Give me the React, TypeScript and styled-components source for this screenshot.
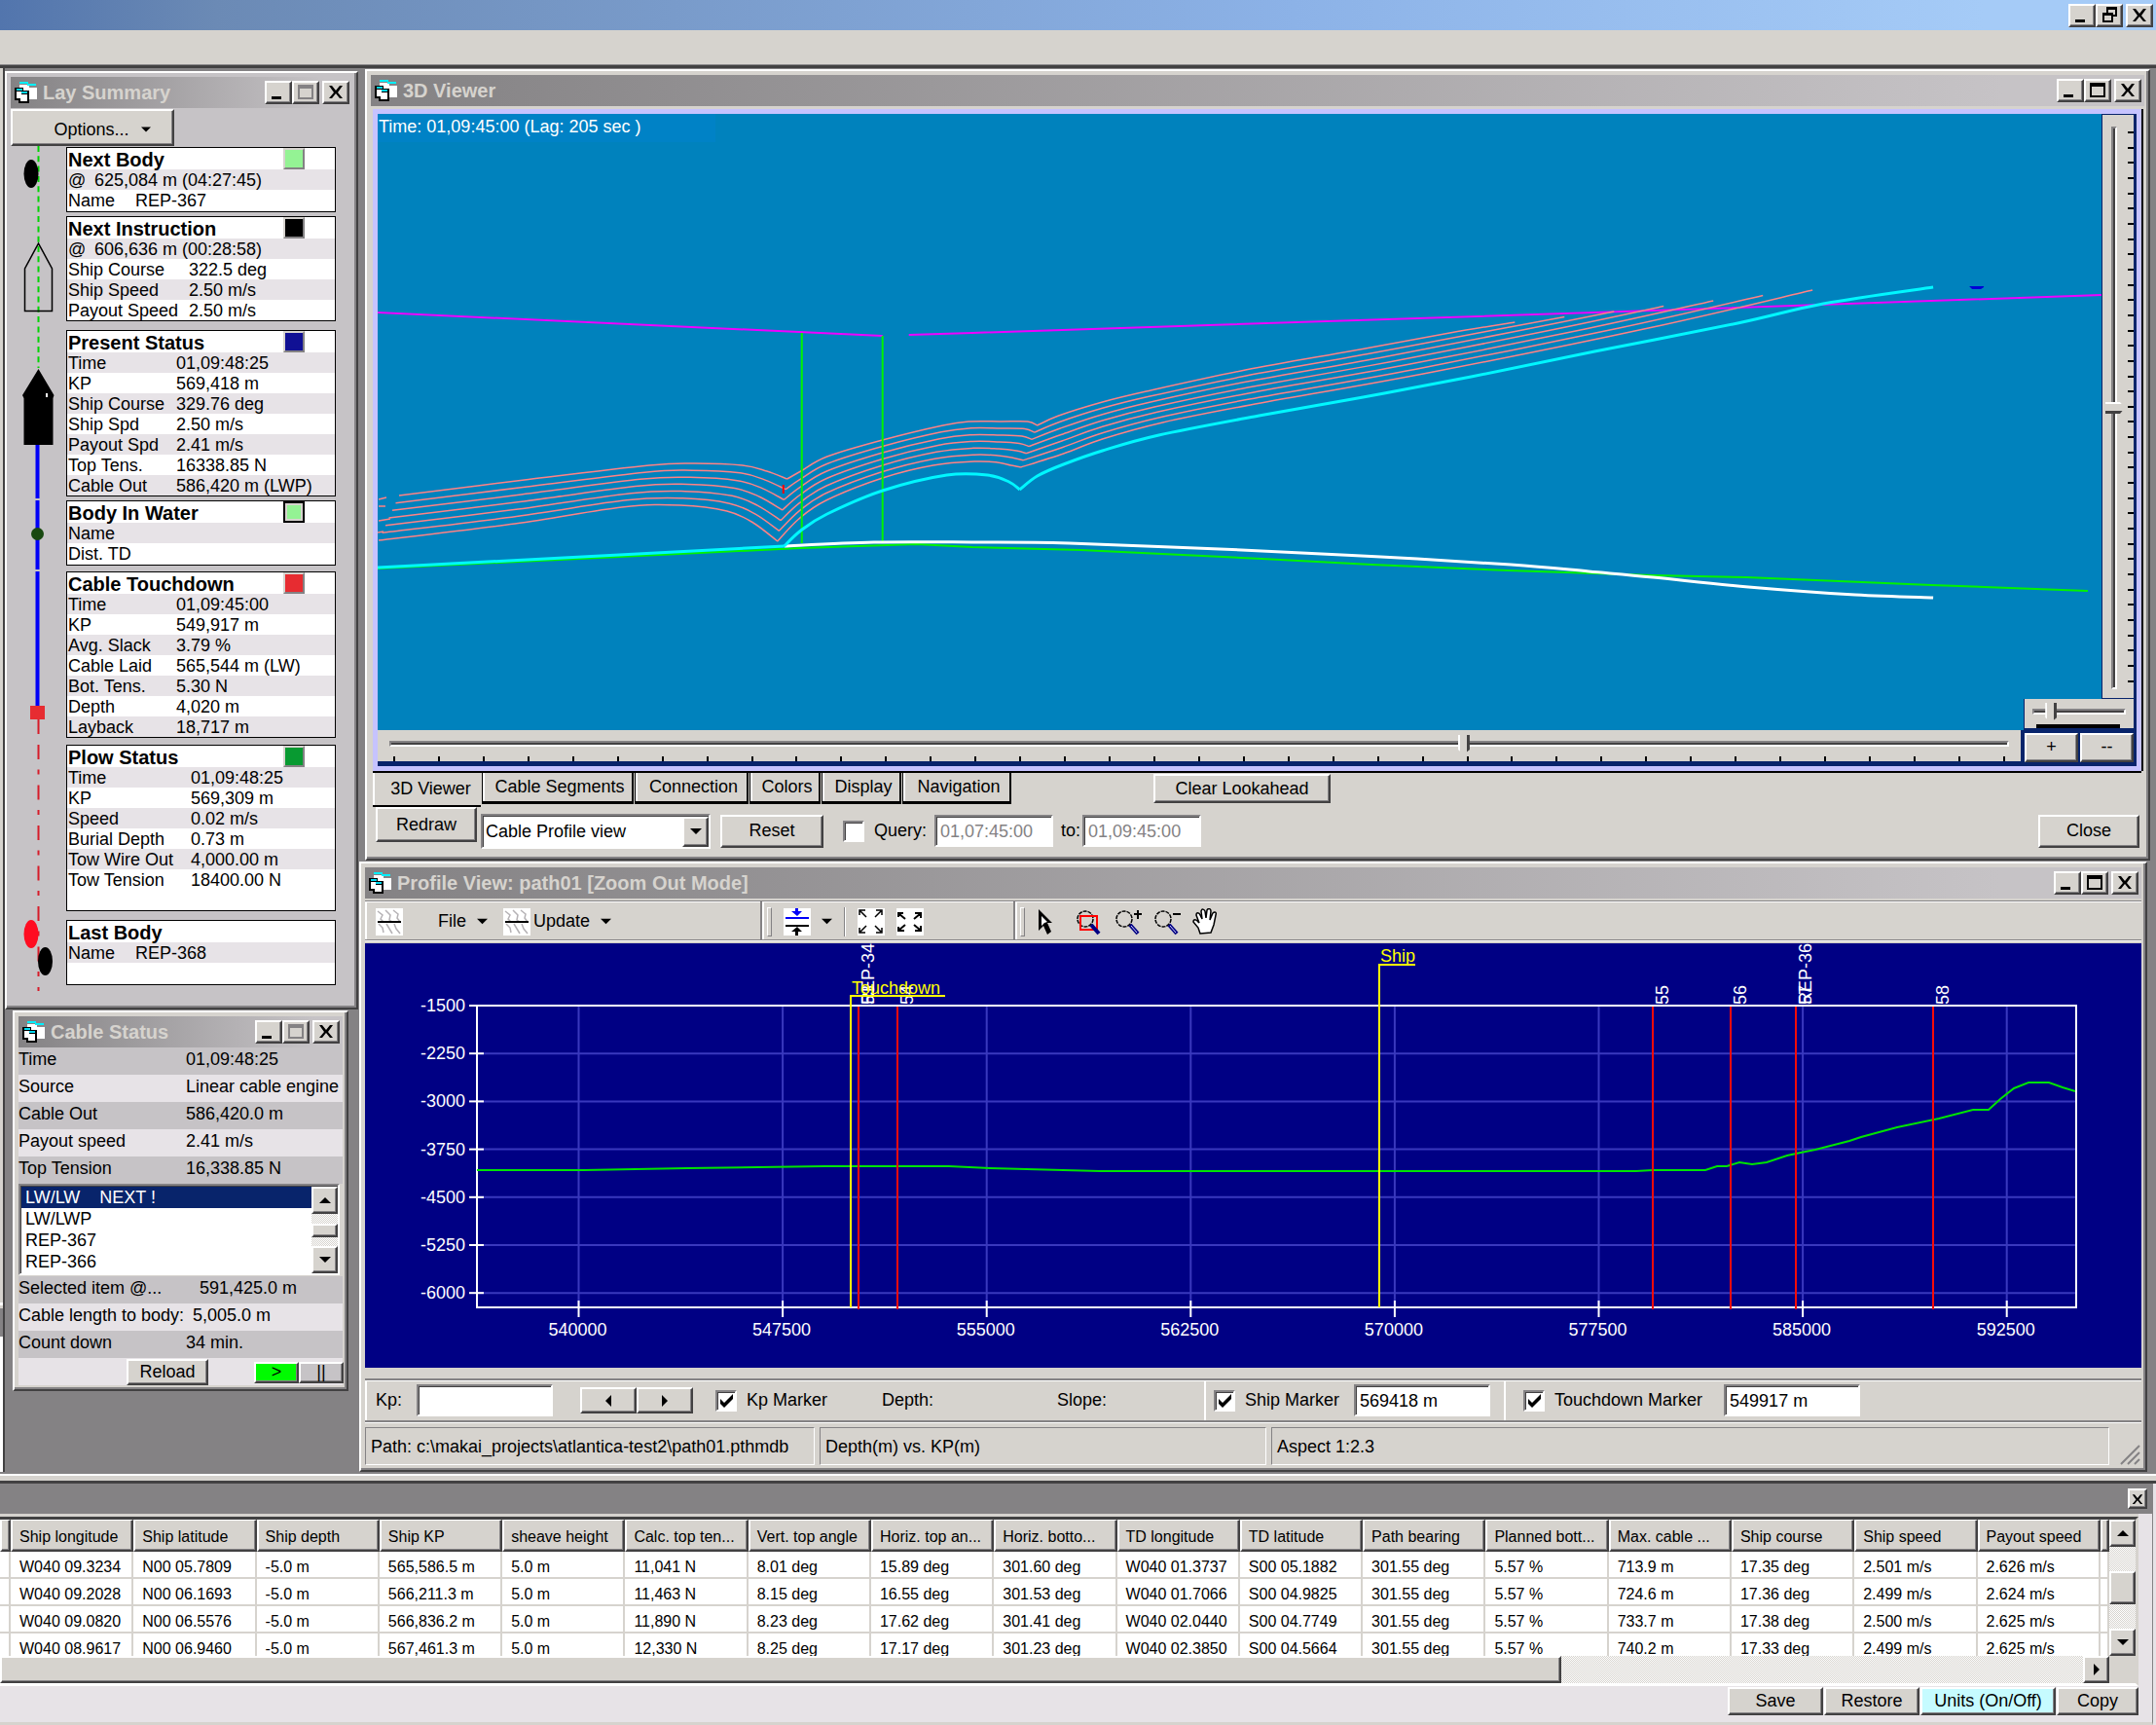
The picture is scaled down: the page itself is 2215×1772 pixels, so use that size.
import { Fragment } from 'react';
import type { ReactNode } from 'react';
import styled, { createGlobalStyle, css } from 'styled-components';

const face = '#d6d3ce';
const shade = '#848284';
const dark = '#424142';
const panel = '#c6c3c6';
const stripe = '#e7e3e7';
const navy = '#08246b';

const raised = css`
  border: 2px solid;
  border-color: #fff ${dark} ${dark} #fff;
  box-shadow: inset -1px -1px 0 ${shade};
  background: ${face};
`;

const sunken = css`
  border: 2px solid;
  border-color: ${shade} #fff #fff ${shade};
  box-shadow: inset 1px 1px 0 ${dark};
  background: #fff;
`;

const dither = css`
  background: repeating-conic-gradient(#fff 0 25%, ${face} 0 50%) 0 0 / 2px 2px;
`;

const GlobalStyle = createGlobalStyle`
  * {
    box-sizing: border-box;
  }

  body {
    margin: 0;
    background: ${stripe};
    color: #000;
    font: 18px/21px 'Liberation Sans', Arial, sans-serif;
  }

  button, input, select {
    margin: 0;
    padding: 0;
    border-radius: 0;
    color: inherit;
    font: inherit;
  }

  svg {
    display: block;
  }
`;

const Page = styled.div`
  display: flex;
  flex-direction: column;
  min-height: 100vh;
`;

const AppTitle = styled.header`
  display: flex;
  align-items: center;
  justify-content: flex-end;
  height: 31px;
  padding-right: 3px;
  background: linear-gradient(90deg, #5275ad 0, #6b8ab5 10%, #8cb2e7 60%, #a5cbf7 92%);
`;

const MenuBar = styled.div`
  height: 39px;
  background: ${face};
  border-bottom: 3px solid ${dark};
  box-shadow: inset 0 -1px 0 ${shade};
`;

const Workspace = styled.main`
  display: flex;
  padding: 1px 4px 2px 0;
  background: ${shade};
`;

const Neighbour = styled.div`
  width: 5px;
  margin-top: -1px;
  background: linear-gradient(#d6d3ce 0 1268px, #fff 1268px 1271px, #d6d3ce 1271px 1274px, #848284 1274px 1303px, #fff 1303px);
  border-right: 2px solid ${dark};
`;

const LeftColumn = styled.div`
  display: flex;
  flex-direction: column;
  gap: 1px;
  width: 363px;
  margin-top: 2px;
`;

const RightColumn = styled.div`
  display: flex;
  flex: 1;
  flex-direction: column;
  gap: 1px;
  min-width: 0;
  margin-left: 1px;
`;

const Frame = styled.section<{ $margin?: string; $body?: string }>`
  margin: ${({ $margin }) => $margin || '0'};
  padding: 4px;
  border: 2px solid;
  border-color: #fff ${dark} ${dark} #fff;
  box-shadow: inset -2px -2px 0 ${shade};
  background: ${({ $body }) => $body || face};
`;

const TitleBar = styled.div`
  display: flex;
  align-items: center;
  height: 32px;
  padding: 0 3px 0 4px;
  background: linear-gradient(90deg, ${shade}, ${panel} 92%);
`;

const TitleText = styled.h2`
  flex: 1;
  margin: 0 0 0 5px;
  color: ${face};
  font-size: 20px;
  line-height: 24px;
  white-space: nowrap;
`;

const Button = styled.button<{ $w?: number; $h?: number; $color?: string }>`
  ${raised}
  display: flex;
  align-items: center;
  justify-content: center;
  flex: none;
  width: ${({ $w }) => ($w ? `${$w}px` : 'auto')};
  height: ${({ $h }) => $h || 34}px;
  background: ${({ $color }) => $color || face};
  white-space: nowrap;
`;

const CaptionButton = styled(Button)`
  width: 28px;
  height: 24px;

  &:last-child {
    margin-left: 3px;
  }
`;

const paths: Record<string, ReactNode> = {
  min: <rect x="4" y="14" width="10" height="3" />,
  max: <path d="M3 2h16v15H3zM5 6v9h12V6z" fillRule="evenodd" />,
  restore: <path d="M8 1h11v10h-4v6H4V7h4zM10 4v3h5v2h2V4zM6 10v5h7v-5z" fillRule="evenodd" />,
  close: <path d="M4 3h3l4 5 4-5h3l-5 7 5 6h-3l-4-5-4 5H4l5-6z" />,
};

const Caption = ({ kind, muted }: { kind: string; muted?: boolean }) => (
  <CaptionButton aria-label={kind}>
    <svg width="22" height="20" fill={muted ? shade : '#000'}>{paths[kind]}</svg>
  </CaptionButton>
);

const FormIcon = () => (
  <svg width="24" height="24" viewBox="0 0 24 24" shapeRendering="crispEdges">
    <path d="M5 4h10v3h8v12H13v-9H5z" fill="#fff" />
    <path d="M5 1h9v2H5zM13 3h9v2h-9z" fill="#00f0ff" />
    <path d="M0 7h9v3h6v13H4v-3H0z" fill="#000" />
    <path d="M2 11h5v7H2zM6 14h7v7H6z" fill="#fff" />
    <path d="M2 8h6v2H2zM7 11h6v2H7z" fill="#00d8ef" />
  </svg>
);

type WindowProps = { title: string; muted?: boolean; margin?: string; body?: string; children: ReactNode };

const Window = ({ title, muted, margin, body, children }: WindowProps) => (
  <Frame $margin={margin} $body={body}>
    <TitleBar>
      <FormIcon />
      <TitleText>{title}</TitleText>
      <Caption kind="min" />
      <Caption kind="max" muted={muted} />
      <Caption kind="close" />
    </TitleBar>
    {children}
  </Frame>
);

const Arrow = ({ dir, size = 12 }: { dir: 'up' | 'down' | 'left' | 'right'; size?: number }) => {
  const d = {
    up: 'M0 9L6 3l6 6z',
    down: 'M0 3h12L6 9z',
    left: 'M9 0v12L3 6z',
    right: 'M3 0v12l6-6z',
  }[dir];
  return <svg width={size} height={size} viewBox="0 0 12 12"><path d={d} /></svg>;
};

/* ---------- Lay summary ---------- */

const OptionsButton = styled(Button)`
  gap: 12px;
  margin-top: 1px;
  padding: 4px 0 0 20px;
`;

const SummaryBody = styled.div`
  display: flex;
  background: ${panel};
`;

const Cards = styled.div`
  flex: 1;
  padding: 1px 17px 0 0;
`;

const Card = styled.div<{ $gap: number; $height: number }>`
  min-height: ${({ $height }) => $height}px;
  margin-top: ${({ $gap }) => $gap}px;
  border: 1px solid #000;
  background: #fff;
`;

const CardTitle = styled.div`
  display: flex;
  height: 22px;
  padding: 0 31px 0 1px;
  font-size: 20px;
  font-weight: 700;
  line-height: 24px;

  span {
    flex: 1;
  }
`;

const Swatch = styled.button<{ $color: string; $active?: boolean }>`
  width: 22px;
  height: 22px;
  border: 2px solid;
  border-color: ${({ $active }) => ($active ? '#000' : `${face} ${shade} ${shade} ${face}`)};
  box-shadow: ${({ $active }) => ($active ? `inset 0 0 0 2px ${face}` : 'none')};
  background: ${({ $color }) => $color};
`;

const CardRow = styled.div<{ $label: number }>`
  display: grid;
  grid-template-columns: ${({ $label }) => $label}px 1fr;
  height: 21px;
  padding-left: 1px;
  line-height: 22px;
  white-space: nowrap;

  &:nth-child(even) {
    background: ${stripe};
  }
`;

type CardData = {
  title: string;
  color?: string;
  active?: boolean;
  gap: number;
  height: number;
  label: number;
  rows: string[][];
};

const cards: CardData[] = [
  { title: 'Next Body', color: '#94f394', gap: 0, height: 67, label: 69, rows: [['@', '625,084 m (04:27:45)'], ['Name', 'REP-367']] },
  {
    title: 'Next Instruction', color: '#000', gap: 4, height: 108, label: 124,
    rows: [['@', '606,636 m (00:28:58)'], ['Ship Course', '322.5 deg'], ['Ship Speed', '2.50 m/s'], ['Payout Speed', '2.50 m/s']],
  },
  {
    title: 'Present Status', color: '#101094', gap: 9, height: 171, label: 111,
    rows: [
      ['Time', '01,09:48:25'], ['KP', '569,418 m'], ['Ship Course', '329.76 deg'], ['Ship Spd', '2.50 m/s'],
      ['Payout Spd', '2.41 m/s'], ['Top Tens.', '16338.85 N'], ['Cable Out', '586,420 m (LWP)'],
    ],
  },
  { title: 'Body In Water', color: '#94f394', active: true, gap: 4, height: 67, label: 111, rows: [['Name', ''], ['Dist. TD', '']] },
  {
    title: 'Cable Touchdown', color: '#e72c31', gap: 6, height: 171, label: 111,
    rows: [
      ['Time', '01,09:45:00'], ['KP', '549,917 m'], ['Avg. Slack', '3.79 %'], ['Cable Laid', '565,544 m (LW)'],
      ['Bot. Tens.', '5.30 N'], ['Depth', '4,020 m'], ['Layback', '18,717 m'],
    ],
  },
  {
    title: 'Plow Status', color: '#089a31', gap: 7, height: 171, label: 126,
    rows: [
      ['Time', '01,09:48:25'], ['KP', '569,309 m'], ['Speed', '0.02 m/s'], ['Burial Depth', '0.73 m'],
      ['Tow Wire Out', '4,000.00 m'], ['Tow Tension', '18400.00 N'],
    ],
  },
  { title: 'Last Body', gap: 9, height: 67, label: 69, rows: [['Name', 'REP-368']] },
];

const LayDiagram = () => (
  <svg width="57" height="881" viewBox="11 150 57 881">
    <path d="M39.500 150V378" stroke="#00d300" strokeWidth="2" strokeDasharray="6 4.300" />
    <ellipse cx="32" cy="178.500" rx="7.500" ry="14.500" />
    <path d="M39.500 250L53.500 276V319.500H25.500V276Z" fill="none" stroke="#000" strokeWidth="1.500" />
    <path d="M39.500 379L55.500 406L54.500 409V457H24.500V409L23 406Z" />
    <rect x="47" y="404" width="2" height="4" fill="#fff" />
    <path d="M38.500 457V512M38.500 514V585M38.500 587V726" stroke="#0000f7" strokeWidth="4" />
    <circle cx="38.500" cy="548.500" r="6.500" fill="#184910" />
    <rect x="31" y="725" width="15" height="14" fill="#e72c31" />
    <path d="M39.500 739V754M39.500 765V1018" stroke="#d61c29" strokeWidth="2" strokeDasharray="15 10.500 5 11" />
    <ellipse cx="32" cy="959.500" rx="7.500" ry="14.500" fill="#ff0c21" />
    <ellipse cx="46.500" cy="987.500" rx="7.500" ry="14.500" />
  </svg>
);

const LaySummary = () => (
  <Window title="Lay Summary" muted body={panel}>
    <OptionsButton $w={168} $h={38}>Options... <Arrow dir="down" size={10} /></OptionsButton>
    <SummaryBody>
      <LayDiagram />
      <Cards>
        {cards.map((card) => (
          <Card key={card.title} $gap={card.gap} $height={card.height}>
            <CardTitle>
              <span>{card.title}</span>
              {card.color && <Swatch aria-label={`${card.title} color`} $color={card.color} $active={card.active} />}
            </CardTitle>
            {card.rows.map(([label, value]) => (
              <CardRow key={label} $label={label === '@' ? 27 : card.label}>
                <span>{label}</span>
                <span>{value}</span>
              </CardRow>
            ))}
          </Card>
        ))}
      </Cards>
    </SummaryBody>
  </Window>
);

/* ---------- Cable status ---------- */

const StatusRow = styled.div<{ $dark?: boolean; $label?: number }>`
  display: grid;
  grid-template-columns: ${({ $label }) => $label || 172}px 1fr;
  height: 28px;
  background: ${({ $dark }) => ($dark ? panel : stripe)};
  line-height: 24px;
  white-space: nowrap;
`;

const ListWrap = styled.div`
  ${sunken}
  display: flex;
  height: 94px;
  margin: 0 3px 1px 0;
  padding: 1px 0 0 1px;
`;

const List = styled.select`
  flex: 1;
  height: 90px;
  border: 0;
  outline: 0;
  background: #fff;
  overflow: hidden;
  scrollbar-width: none;

  option {
    min-height: 22px;
    padding: 1px 4px 0;
    line-height: 22px;
  }

  option:checked {
    background: linear-gradient(${navy}, ${navy});
    color: #fff;
    -webkit-text-fill-color: #fff;
  }
`;

const ScrollColumn = styled.div`
  ${dither}
  display: flex;
  flex-direction: column;
  justify-content: space-between;
  width: 27px;
`;

const StatusFooter = styled.div`
  display: flex;
  align-items: center;
  height: 28px;
  padding-top: 1px;
  background: ${stripe};

  button:first-child {
    margin: 0 47px 0 111px;
  }
`;

const CableStatus = () => (
  <Window title="Cable Status" muted margin="0 10px 0 8px" body={face}>
    <StatusRow $dark><span>Time</span><span>01,09:48:25</span></StatusRow>
    <StatusRow><span>Source</span><span>Linear cable engine</span></StatusRow>
    <StatusRow $dark><span>Cable Out</span><span>586,420.0 m</span></StatusRow>
    <StatusRow><span>Payout speed</span><span>2.41 m/s</span></StatusRow>
    <StatusRow $dark><span>Top Tension</span><span>16,338.85 N</span></StatusRow>
    <ListWrap>
      <List size={4} defaultValue="LW/LW" aria-label="Cable items">
        <option value="LW/LW">{'LW/LW\u00a0\u00a0\u00a0\u00a0NEXT !'}</option>
        <option>LW/LWP</option>
        <option>REP-367</option>
        <option>REP-366</option>
      </List>
      <ScrollColumn>
        <Button $h={28} aria-label="Scroll up"><Arrow dir="up" /></Button>
        <Button $h={14} aria-label="Scroll thumb" />
        <Button $h={28} aria-label="Scroll down"><Arrow dir="down" /></Button>
      </ScrollColumn>
    </ListWrap>
    <StatusRow $dark $label={186}><span>Selected item @...</span><span>591,425.0 m</span></StatusRow>
    <StatusRow $label={179}><span>Cable length to body:</span><span>5,005.0 m</span></StatusRow>
    <StatusRow $dark><span>Count down</span><span>34 min.</span></StatusRow>
    <StatusFooter>
      <Button $w={84} $h={27}>Reload</Button>
      <Button $w={46} $h={22} $color="#00fb00">&gt;</Button>
      <Button $w={46} $h={22} $color={panel}>||</Button>
    </StatusFooter>
  </Window>
);

/* ---------- 3D viewer ---------- */

type Point = [number, number];

// Catmull-Rom spline through the points, written as cubic beziers
const curve = (pts: Point[]) =>
  pts.reduce((d, p, i) => {
    if (i === 0) return `M${p[0]} ${p[1]}`;
    const a = pts[i - 1];
    const before = pts[i - 2] || a;
    const after = pts[i + 1] || p;
    const c = [a[0] + (p[0] - before[0]) / 6, a[1] + (p[1] - before[1]) / 6, p[0] - (after[0] - a[0]) / 6, p[1] - (after[1] - a[1]) / 6];
    return `${d}C${c.map((n) => n.toFixed(1)).join(' ')} ${p[0]} ${p[1]}`;
  }, '');

const mix = (a: Point[], b: Point[], t: number): Point[] =>
  a.map(([x, y], i) => [x + (b[i][0] - x) * t, y + (b[i][1] - y) * t]);

// top and bottom line of the lookahead bundle, cut at the two dips
const topLine: Point[][] = [
  [[411, 509], [540, 493], [668, 478], [715, 476], [764, 478], [789, 484], [810, 492]],
  [[810, 492], [824, 484], [851, 469], [908, 452], [970, 437], [998, 433], [1030, 433], [1057, 433], [1067, 437]],
  [[1067, 437], [1089, 427], [1134, 413], [1179, 402], [1281, 380], [1393, 360], [1491, 342], [1558, 331]],
];
const bottomLine: Point[][] = [
  [[390, 555], [530, 538], [640, 521], [700, 519], [748, 525], [775, 537], [800, 556]],
  [[800, 556], [822, 533], [850, 514], [908, 491], [960, 478], [1003, 474], [1026, 475], [1040, 478], [1050, 480]],
  [[1050, 480], [1094, 466], [1134, 451], [1196, 434], [1286, 416], [1469, 383], [1700, 336], [1864, 298]],
];

const ViewerFrame = styled.div`
  position: relative;
  margin: 3px 3px 0 2px;
  border: 5px solid #c6c3ff;
  box-shadow: 0 2px 0 #000, 2px 0 0 #000;
  background: ${navy};
`;

const Scene = styled.div`
  display: flex;
  height: 633px;

  > svg {
    flex: 1;
    min-width: 0;
    background: #0082bd;
  }
`;

const SceneCaption = styled.div`
  position: absolute;
  top: 0;
  left: 0;
  width: 347px;
  height: 29px;
  padding: 3px 0 0 1px;
  background: #0082c6;
  color: #fff;
  white-space: nowrap;
`;

const groove = css`
  border: 2px solid;
  border-color: ${shade} #fff #fff ${shade};
  background: ${dark};
`;

const Range = styled.input<{ $vertical?: boolean }>`
  display: block;
  appearance: none;
  width: 100%;
  height: 22px;
  background: transparent;

  &::-webkit-slider-runnable-track {
    ${groove}
    height: 6px;
  }

  &::-webkit-slider-thumb {
    appearance: none;
    width: 12px;
    height: 20px;
    margin-top: -8px;
    background: linear-gradient(90deg, #fff 0 2px, ${face} 2px 9px, ${dark} 9px);
    clip-path: polygon(0 0, 100% 0, 100% 75%, 50% 100%, 0 75%);
  }

  ${({ $vertical }) =>
    $vertical &&
    css`
      width: 22px;
      height: 578px;
      writing-mode: vertical-lr;

      &::-webkit-slider-runnable-track {
        width: 6px;
        height: 100%;
      }

      &::-webkit-slider-thumb {
        width: 20px;
        height: 12px;
        margin: 0 0 0 -8px;
        background: linear-gradient(#fff 0 2px, ${face} 2px 9px, ${dark} 9px);
        clip-path: polygon(0 0, 75% 0, 100% 50%, 75% 100%, 0 100%);
      }
    `}
`;

const Ticks = styled.div<{ $vertical?: boolean }>`
  display: flex;
  flex-direction: ${({ $vertical }) => ($vertical ? 'column' : 'row')};
  justify-content: space-between;

  i {
    width: ${({ $vertical }) => ($vertical ? 6 : 2)}px;
    height: ${({ $vertical }) => ($vertical ? 2 : 5)}px;
    background: #000;
  }
`;

const SideSlider = styled.div`
  display: flex;
  justify-content: space-between;
  width: 36px;
  height: 601px;
  padding: 12px 0 0 1px;
  border: 1px solid ${navy};
  border-right-width: 3px;
  background: ${face};

  ${Ticks} {
    height: 566px;
    margin-top: 5px;
  }
`;

const BottomSlider = styled.div`
  height: 37px;
  margin-right: 119px;
  padding: 3px 12px 0;
  border-bottom: 5px solid ${navy};
  background: ${face};

  ${Ticks} {
    margin: 2px 4px 0;
  }
`;

const ZoomPad = styled.div`
  position: absolute;
  right: 0;
  bottom: 0;
  display: grid;
  grid-template-columns: 1fr 1fr;
  gap: 4px 2px;
  width: 116px;
  height: 69px;
  padding: 0 3px 4px 1px;
  background: ${navy};
`;

const ZoomSlider = styled.div`
  grid-column: 1 / 3;
  height: 30px;
  padding: 2px 8px 0;
  background: ${face};

  &::after {
    display: block;
    width: 86px;
    height: 4px;
    margin: 2px 0 0 4px;
    background: #000;
    content: '';
  }
`;

const Tabs = styled.div`
  display: flex;
  height: 35px;
  margin: 2px 2px 0;
  gap: 1px;
  padding-right: 5px;
`;

const Tab = styled.button<{ $w: number; $active?: boolean }>`
  width: ${({ $w }) => $w}px;
  height: ${({ $active }) => ($active ? 35 : 32)}px;
  padding: ${({ $active }) => ($active ? '0 0 0 8px' : '0 0 0 5px')};
  border: solid #000;
  border-width: ${({ $active }) => ($active ? '0 0 2px' : '0 2px 3px 1px')};
  box-shadow: inset 2px 0 0 #fff;
  background: ${face};
  white-space: nowrap;
`;

const ClearButton = styled(Button)`
  margin: 1px 0 0 145px;
`;

const Controls = styled.div`
  display: flex;
  align-items: center;
  height: 49px;
  padding: 0 5px 0 5px;
`;

const Combo = styled.label`
  ${sunken}
  display: flex;
  width: 236px;
  height: 36px;
  margin: 0 10px 0 4px;
  padding: 1px 0 0 1px;

  select {
    flex: 1;
    min-width: 0;
    padding-left: 2px;
    border: 0;
    appearance: none;
    background: #fff;
  }

  span {
    ${raised}
    display: flex;
    align-items: center;
    justify-content: center;
    width: 27px;
  }
`;

const Check = styled.input`
  ${sunken}
  flex: none;
  width: 22px;
  height: 22px;
  appearance: none;

  &:checked {
    background: #fff url("data:image/svg+xml,%3Csvg xmlns='http://www.w3.org/2000/svg' viewBox='0 0 18 18'%3E%3Cpath d='M3 7v5l4 4 9-9V2L7 11z'/%3E%3C/svg%3E");
  }
`;

const CheckLabel = styled.label`
  display: flex;
  align-items: center;
  gap: 10px;
  white-space: nowrap;
`;

const Field = styled.input<{ $w: number }>`
  ${sunken}
  width: ${({ $w }) => $w}px;
  height: 33px;
  padding: 2px 4px 0;

  &:disabled {
    color: ${shade};
  }
`;

const RedrawButton = styled(Button)`
  align-self: flex-start;
`;

const QueryGroup = styled.div`
  display: flex;
  align-items: center;
  gap: 8px;
  margin-left: 20px;

  label:last-child {
    display: flex;
    align-items: center;
    gap: 2px;
  }
`;

const CloseButton = styled(Button)`
  margin-left: auto;
`;

const tabs: [string, number][] = [
  ['Cable Segments', 156], ['Connection', 117], ['Colors', 73], ['Display', 82], ['Navigation', 112],
];
const marks = Array.from({ length: 37 }, (_, i) => <i key={i} />);

const Viewer = () => (
  <Window title="3D Viewer" margin="0 2px 0 6px">
    <ViewerFrame>
      <Scene>
        <svg viewBox="389 117 1772 633" preserveAspectRatio="none" height="633" fill="none">
          <path d="M389 321L908 345M935 344L1000 342L1700 319L2161 303" stroke="#ef00ff" strokeWidth="2" />
          <g stroke="#ff8284" strokeWidth="1.500">
            {[0, 1, 2, 3, 4, 5, 6].map((n) => (
              <path key={n} d={topLine.map((part, i) => curve(mix(part, bottomLine[i], n / 6))).join('')} />
            ))}
            <path d="M390 513l8-2M390 520h7M390 535l12-2M389 547l6-1" />
          </g>
          <path d="M806 498v9" stroke="#ff0000" strokeWidth="2" />
          <path d="M825 342V558M908 345V556" stroke="#00f300" strokeWidth="2" />
          <path
            d="M389 584L823 563L943 559L1000 562L1112 565L1298 574L1411 580L1551 586L1700 591L1796 593L1986 601L2147 607"
            stroke="#00f300"
            strokeWidth="2"
          />
          <path d={curve([[807, 561], [899, 557], [1000, 557], [1100, 558], [1277, 565], [1420, 572], [1554, 580], [1634, 587], [1700, 593], [1798, 603], [1908, 611], [1988, 614]])} stroke="#fff" strokeWidth="3" />
          <g stroke="#00f7ff" strokeWidth="3">
            <path d="M389 583L807 561" />
            <path d={curve([[807, 561], [824, 545], [851, 528], [908, 504], [974, 488], [1016, 488], [1038, 495], [1049, 503]])} />
            <path d={curve([[1049, 503], [1067, 489], [1094, 477], [1134, 463], [1192, 447], [1295, 427], [1402, 408], [1513, 387], [1640, 361], [1787, 332], [1875, 312], [1988, 295]])} />
          </g>
          <path d="M2025 294h15v1l-3 2h-9z" fill="#0000d6" />
        </svg>
        <SideSlider>
          <Range type="range" $vertical min={0} max={1000} defaultValue={500} aria-label="Tilt" />
          <Ticks $vertical>{marks}</Ticks>
        </SideSlider>
      </Scene>
      <SceneCaption>Time: 01,09:45:00 (Lag: 205 sec )</SceneCaption>
      <BottomSlider>
        <Range type="range" min={0} max={1000} defaultValue={665} aria-label="Rotation" />
        <Ticks>{marks}</Ticks>
      </BottomSlider>
      <ZoomPad>
        <ZoomSlider><Range type="range" min={0} max={100} defaultValue={14} aria-label="Zoom" /></ZoomSlider>
        <Button $h={30}>+</Button>
        <Button $h={30}>--</Button>
      </ZoomPad>
    </ViewerFrame>
    <Tabs>
      <Tab $w={111} $active>3D Viewer</Tab>
      {tabs.map(([name, width]) => <Tab key={name} $w={width}>{name}</Tab>)}
      <ClearButton $w={182} $h={30}>Clear Lookahead</ClearButton>
    </Tabs>
    <Controls>
      <RedrawButton $w={104} $h={36}>Redraw</RedrawButton>
      <Combo>
        <select aria-label="View"><option>Cable Profile view</option></select>
        <span><Arrow dir="down" /></span>
      </Combo>
      <Button $w={106} $h={34}>Reset</Button>
      <QueryGroup>
        <CheckLabel><Check type="checkbox" />Query:</CheckLabel>
        <Field $w={122} disabled defaultValue="01,07:45:00" aria-label="Query from" />
        <label>to:<Field $w={122} disabled defaultValue="01,09:45:00" /></label>
      </QueryGroup>
      <CloseButton $w={104} $h={34}>Close</CloseButton>
    </Controls>
  </Window>
);

/* ---------- Profile view ---------- */

const Toolbar = styled.div`
  display: flex;
  height: 41px;
  margin: 2px 0 3px;
  border: solid ${shade};
  border-width: 1px 0;
  box-shadow: inset 0 1px 0 #fff, 0 1px 0 #fff;
`;

const ToolGroup = styled.div<{ $w?: number; $gap: number }>`
  display: flex;
  align-items: center;
  gap: ${({ $gap }) => $gap}px;
  width: ${({ $w }) => ($w ? `${$w}px` : 'auto')};
  padding: 2px 0 0 9px;
  border-left: 2px solid #fff;
  border-right: ${({ $w }) => ($w ? `2px solid ${shade}` : '0')};
`;

const Tool = styled.button`
  display: flex;
  align-items: center;
  padding: 0;
  border: 0;
  background: none;

  svg + svg {
    margin-left: 11px;
  }
`;

const MenuTool = styled(Tool)<{ $indent?: number }>`
  gap: 11px;
  margin-left: ${({ $indent }) => $indent || 0}px;

  span {
    display: flex;
    align-items: center;
    gap: 3px;
  }
`;

const Gripper = styled.div`
  width: 5px;
  height: 30px;
  margin-left: -6px;
  border: 1px solid;
  border-color: #fff ${shade} ${shade} #fff;
`;

const Divider = styled.div`
  width: 2px;
  height: 30px;
  border-left: 1px solid ${shade};
  border-right: 1px solid #fff;
`;

const WavesIcon = () => (
  <svg width="28" height="28" viewBox="0 0 28 28">
    <path d="M0 0h28v28H0z" fill="#fff" />
    <path d="M2 3l5 4-2 4 3 3M10 2l5 5-1 5 3 2M18 2l5 4-1 4 3 4M3 16l4 4 1 5M11 16l3 5 3 5M19 16l2 5 4 5" fill="none" stroke="#b5b2b5" strokeWidth="1.500" />
    <path d="M2 13h24v2H2z" />
  </svg>
);

const SqueezeIcon = () => (
  <svg width="28" height="28" viewBox="0 0 28 28">
    <path d="M0 0h28v28H0z" fill="#fff" />
    <path d="M2 9h24v2H2zM12 0h3v3h4l-5 5-6-5h4z" fill="#0000f7" />
    <path d="M2 17h24v2H2zM12 28h3v-4h4l-5-5-6 5h4z" />
  </svg>
);

const ExpandIcon = ({ inward }: { inward?: boolean }) => (
  <svg width="28" height="28" viewBox="0 0 28 28">
    <path d="M0 0h28v28H0z" fill="#fff" />
    {inward ? (
      <path d="M2 9V5h5M3 6l6 5M19 5h6v5M24 6l-6 5M2 19v4h6M3 22l6-5M19 23h6v-5M24 22l-6-5" fill="none" stroke="#000" strokeWidth="2" />
    ) : (
      <path d="M2 7V2h6M3 3l6 6M19 2h6v5M24 3l-6 6M2 20v5h6M3 24l6-6M19 25h6v-5M24 24l-6-6" fill="none" stroke="#000" strokeWidth="1.500" />
    )}
  </svg>
);

const Lens = ({ sign }: { sign: 'box' | 'plus' | 'minus' }) => (
  <svg width="28" height="28" viewBox="0 0 28 28" fill="none">
    <circle cx="10" cy="11" r="8" stroke="#000" strokeWidth="1.500" strokeDasharray="4 1" />
    {sign === 'box' && <path d="M5 8h17v14H5z" stroke="#ff0000" strokeWidth="2" />}
    <path d="M16 17l8 9" stroke="#000084" strokeWidth="4" />
    {sign !== 'box' && <path d="M17 18l6 7" stroke="#d6d3ff" strokeWidth="1" />}
    {sign === 'plus' && <path d="M20 6h8M24 2v9" stroke="#000" strokeWidth="2" />}
    {sign === 'minus' && <path d="M20 6h8" stroke="#000" strokeWidth="2" />}
  </svg>
);

const HandIcon = () => (
  <svg width="28" height="28" viewBox="0 0 28 28">
    <path
      d="M8 26l-2-6-5-6c0-3 3-3 5 0l1 1L4 7c0-3 3-3 4 0l2 4-1-8c1-3 3-2 4 0l1 7 1-8c2-3 4-1 4 1l-1 9 3-7c2-2 4-1 3 2l-2 10-3 8z"
      fill="#fff"
      stroke="#000"
      strokeWidth="1.500"
    />
  </svg>
);

const PointerIcon = () => (
  <svg width="28" height="28" viewBox="0 0 28 28">
    <path d="M2 1l14 14h-5l4 9-4 3-4-9-5 5z" fill="#000" />
    <path d="M5 8l6 6-3 1-3 3z" fill="#fff" />
  </svg>
);

const Chart = styled.svg`
  width: 100%;
  height: auto;
  background: #000084;

  text {
    fill: #fff;
    font: 18px 'Liberation Sans', Arial, sans-serif;
  }
`;

const MarkerText = styled.text`
  && {
    fill: #ffff00;
  }
`;

const xLabels = [540000, 547500, 555000, 562500, 570000, 577500, 585000, 592500];
const yLabels = [-1500, -2250, -3000, -3750, -4500, -5250, -6000];
const bodies: [number, string[]][] = [
  [882, ['53', 'REP-34']], [922, ['54']], [1698, ['55']], [1778, ['56']], [1845, ['57', 'REP-36']], [1986, ['58']],
];
const xAt = (i: number) => 594.5 + i * 209.6;
const yAt = (i: number) => 1033 + i * 49.2;

const ProfileChart = () => (
  <Chart viewBox="375 969 1825 436">
    {xLabels.map((kp, i) => <path key={kp} d={`M${xAt(i)} 1033V1343`} stroke="#3938bd" strokeWidth="2" />)}
    {yLabels.map((depth, i) => <path key={depth} d={`M490 ${yAt(i)}H2132`} stroke="#3938bd" strokeWidth="2" />)}
    <path d="M490 1033H2133V1343H490Z" fill="none" stroke="#fff" strokeWidth="2" />
    {xLabels.map((kp, i) => (
      <Fragment key={kp}>
        <path d={`M${xAt(i)} 1336V1353`} stroke="#fff" strokeWidth="2" />
        <text x={xAt(i) - 1} y="1372" textAnchor="middle">{kp}</text>
      </Fragment>
    ))}
    {yLabels.map((depth, i) => (
      <Fragment key={depth}>
        <path d={`M482 ${yAt(i)}H497`} stroke="#fff" strokeWidth="2" />
        <text x="478" y={yAt(i) + 6} textAnchor="end">{depth}</text>
      </Fragment>
    ))}
    <path
      d="M490 1202L600 1202L706 1200L847 1198L975 1198L1017 1200L1130 1203L1681 1203L1698 1202L1752 1202L1764 1198L1774 1198L1787 1194L1800 1196L1815 1194L1836 1187L1850 1184L1865 1181L1900 1172L1912 1168L1949 1158L1992 1149L2027 1140L2043 1140L2055 1129L2069 1118L2084 1112L2105 1112L2119 1117L2132 1121"
      fill="none"
      stroke="#00e300"
      strokeWidth="2"
    />
    {bodies.map(([x, names]) => (
      <Fragment key={x}>
        <path d={`M${x} 1034V1345`} stroke="#f70c08" strokeWidth="2" />
        {names.map((name) => (
          <text key={name} transform={`translate(${x + 16} 1032) rotate(-90)`}>{name}</text>
        ))}
      </Fragment>
    ))}
    <g fill="none" stroke="#ffff00" strokeWidth="2">
      <path d="M971 1023H874V1343" />
      <path d="M1454 991H1417V1343" />
    </g>
    <MarkerText x="875" y="1021">Touchdown</MarkerText>
    <MarkerText x="1418" y="988">Ship</MarkerText>
  </Chart>
);

const MarkerBar = styled.div`
  display: flex;
  height: 45px;
  margin-top: 11px;
  border: solid ${shade};
  border-width: 2px 0;
  box-shadow: inset 0 1px 0 #fff, 0 1px 0 #fff;
`;

const MarkerGroup = styled.div<{ $w?: number; $indent: number; $gap: number }>`
  display: flex;
  align-items: center;
  gap: ${({ $gap }) => $gap}px;
  width: ${({ $w }) => ($w ? `${$w}px` : 'auto')};
  padding-left: ${({ $indent }) => $indent}px;
  border-left: 2px solid #fff;
  white-space: nowrap;
`;

const KpField = styled.label`
  display: flex;
  align-items: center;
  gap: 15px;
`;

const Stepper = styled.div`
  display: flex;
  margin: 0 23px 0 28px;
`;

const Readout = styled.span<{ $w: number }>`
  width: ${({ $w }) => $w}px;
`;

const StatusBar = styled.footer`
  display: flex;
  align-items: flex-end;
  gap: 5px;
  height: 39px;
  margin: 5px 0 1px;

  > svg {
    margin-left: 6px;
  }
`;

const StatusPane = styled.div<{ $w?: number }>`
  flex: ${({ $w }) => ($w ? `0 0 ${$w}px` : '1')};
  height: 39px;
  padding: 9px 0 0 5px;
  border: 1px solid;
  border-color: ${shade} #fff #fff ${shade};
  white-space: nowrap;
`;

const Profile = () => (
  <Window title="Profile View: path01 [Zoom Out Mode]" margin="0 5px 0 0">
    <Toolbar>
      <ToolGroup $w={408} $gap={16}>
        <Tool aria-label="Profile"><WavesIcon /></Tool>
        <MenuTool $indent={20}>File <Arrow dir="down" size={11} /></MenuTool>
        <MenuTool><span><WavesIcon />Update</span><Arrow dir="down" size={11} /></MenuTool>
      </ToolGroup>
      <ToolGroup $w={260} $gap={12}>
        <Gripper />
        <Tool aria-label="Squeeze"><SqueezeIcon /><Arrow dir="down" size={11} /></Tool>
        <Divider />
        <Tool aria-label="Expand"><ExpandIcon /></Tool>
        <Tool aria-label="Shrink"><ExpandIcon inward /></Tool>
      </ToolGroup>
      <ToolGroup $gap={12}>
        <Gripper />
        <Tool aria-label="Pointer"><PointerIcon /></Tool>
        <Tool aria-label="Zoom window"><Lens sign="box" /></Tool>
        <Tool aria-label="Zoom in"><Lens sign="plus" /></Tool>
        <Tool aria-label="Zoom out"><Lens sign="minus" /></Tool>
        <Tool aria-label="Pan"><HandIcon /></Tool>
      </ToolGroup>
    </Toolbar>
    <ProfileChart />
    <MarkerBar>
      <MarkerGroup $w={862} $indent={9} $gap={0}>
        <KpField>Kp: <Field $w={140} /></KpField>
        <Stepper>
          <Button $w={58} $h={27} aria-label="Previous"><Arrow dir="left" /></Button>
          <Button $w={58} $h={27} aria-label="Next"><Arrow dir="right" /></Button>
        </Stepper>
        <Readout $w={171}><CheckLabel><Check type="checkbox" defaultChecked />Kp Marker</CheckLabel></Readout>
        <Readout $w={180}>Depth:</Readout>
        <span>Slope:</span>
      </MarkerGroup>
      <MarkerGroup $w={308} $indent={8} $gap={15}>
        <CheckLabel><Check type="checkbox" defaultChecked />Ship Marker</CheckLabel>
        <Field $w={140} defaultValue="569418 m" aria-label="Ship KP" />
      </MarkerGroup>
      <MarkerGroup $indent={18} $gap={22}>
        <CheckLabel><Check type="checkbox" defaultChecked />Touchdown Marker</CheckLabel>
        <Field $w={140} defaultValue="549917 m" aria-label="Touchdown KP" />
      </MarkerGroup>
    </MarkerBar>
    <StatusBar>
      <StatusPane $w={462}>Path: c:\makai_projects\atlantica-test2\path01.pthmdb</StatusPane>
      <StatusPane $w={459}>Depth(m) vs. KP(m)</StatusPane>
      <StatusPane>Aspect 1:2.3</StatusPane>
      <svg width="22" height="22" stroke={shade} strokeWidth="2"><path d="M1 21L20 2M8 21L20 9M15 21L20 16" /></svg>
    </StatusBar>
  </Window>
);

/* ---------- Data table ---------- */

const Splitter = styled.div`
  height: 10px;
  background: ${face};
  border-top: 2px solid #fff;
  border-bottom: 3px solid ${dark};
`;

const DockTitle = styled.div`
  display: flex;
  align-items: center;
  justify-content: flex-end;
  height: 31px;
  margin-right: 3px;
  padding-right: 6px;
  background: ${shade};
`;

const Dock = styled.section`
  flex: 1;
  margin-right: 3px;
  padding: 3px 14px 0 0;
  border-right: 1px solid ${shade};
  border-bottom: 3px solid ${face};
  background: ${stripe};
`;

const Grid = styled.div`
  display: grid;
  grid-template-columns: 1fr 27px;
  border: solid;
  border-width: 3px 3px 3px 0;
  border-color: ${dark} ${face} #fff;
  box-shadow: 0 -3px 0 ${face};
  background: #fff;
`;

const TableClip = styled.div`
  height: 140px;
  overflow: hidden;
`;

const Table = styled.table`
  width: 100%;
  border-collapse: separate;
  border-spacing: 0;
  table-layout: fixed;
  font-size: 16px;
  text-align: left;

  th, td {
    padding: 0 0 0 9px;
    overflow: hidden;
    font-weight: 400;
    white-space: nowrap;
  }

  th {
    ${raised}
    height: 33px;
    padding: 3px 0 0 7px;
    border-top-width: 1px;
  }

  td {
    height: 28px;
    padding-top: 5px;
    border: solid ${face};
    border-width: 0 2px 2px 0;
  }
`;

const GridScroll = styled(ScrollColumn)`
  height: 140px;
`;

const BottomScroll = styled.div`
  ${dither}
  display: flex;
  justify-content: space-between;
  height: 28px;
`;

const ScrollThumb = styled.div`
  ${raised}
  width: 74%;
`;

const Corner = styled.div`
  background: ${face};
`;

const DockButtons = styled.div`
  display: flex;
  justify-content: flex-end;
  gap: 1px;
  padding-top: 1px;
`;

const headers = [
  'Ship longitude', 'Ship latitude', 'Ship depth', 'Ship KP', 'sheave height', 'Calc. top ten...', 'Vert. top angle',
  'Horiz. top an...', 'Horiz. botto...', 'TD longitude', 'TD latitude', 'Path bearing', 'Planned bott...',
  'Max. cable ...', 'Ship course', 'Ship speed', 'Payout speed',
];
const records = [
  ['W040 09.3234', 'N00 05.7809', '-5.0 m', '565,586.5 m', '5.0 m', '11,041 N', '8.01 deg', '15.89 deg', '301.60 deg', 'W040 01.3737', 'S00 05.1882', '301.55 deg', '5.57 %', '713.9 m', '17.35 deg', '2.501 m/s', '2.626 m/s'],
  ['W040 09.2028', 'N00 06.1693', '-5.0 m', '566,211.3 m', '5.0 m', '11,463 N', '8.15 deg', '16.55 deg', '301.53 deg', 'W040 01.7066', 'S00 04.9825', '301.55 deg', '5.57 %', '724.6 m', '17.36 deg', '2.499 m/s', '2.624 m/s'],
  ['W040 09.0820', 'N00 06.5576', '-5.0 m', '566,836.2 m', '5.0 m', '11,890 N', '8.23 deg', '17.62 deg', '301.41 deg', 'W040 02.0440', 'S00 04.7749', '301.55 deg', '5.57 %', '733.7 m', '17.38 deg', '2.500 m/s', '2.625 m/s'],
  ['W040 08.9617', 'N00 06.9460', '-5.0 m', '567,461.3 m', '5.0 m', '12,330 N', '8.25 deg', '17.17 deg', '301.23 deg', 'W040 02.3850', 'S00 04.5664', '301.55 deg', '5.57 %', '740.2 m', '17.33 deg', '2.499 m/s', '2.625 m/s'],
];

const DataDock = () => (
  <>
    <DockTitle>
      <Button $w={20} $h={21} aria-label="Close table">
        <svg width="12" height="12" viewBox="3 2 16 15">{paths.close}</svg>
      </Button>
    </DockTitle>
    <Dock>
      <Grid>
        <TableClip>
          <Table>
            <colgroup>
              <col width="11" />
              {headers.map((name) => <col key={name} />)}
              <col width="9" />
            </colgroup>
            <thead>
              <tr><th />{headers.map((name) => <th key={name}>{name}</th>)}<th /></tr>
            </thead>
            <tbody>
              {records.map((record) => (
                <tr key={record[0]}><td />{record.map((value, i) => <td key={headers[i]}>{value}</td>)}<td /></tr>
              ))}
            </tbody>
          </Table>
        </TableClip>
        <GridScroll>
          <Button $h={28} aria-label="Scroll up"><Arrow dir="up" /></Button>
          <Button $h={34} aria-label="Scroll thumb" />
          <Button $h={28} aria-label="Scroll down"><Arrow dir="down" /></Button>
        </GridScroll>
        <BottomScroll>
          <ScrollThumb />
          <Button $w={27} $h={28} aria-label="Scroll right"><Arrow dir="right" /></Button>
        </BottomScroll>
        <Corner />
      </Grid>
      <DockButtons>
        <Button $w={98} $h={29}>Save</Button>
        <Button $w={98} $h={29}>Restore</Button>
        <Button $w={139} $h={29} $color="#c6fbff">Units (On/Off)</Button>
        <Button $w={84} $h={29}>Copy</Button>
      </DockButtons>
    </Dock>
  </>
);

const App = () => (
  <Page>
    <GlobalStyle />
    <AppTitle>
      <Caption kind="min" />
      <Caption kind="restore" />
      <Caption kind="close" />
    </AppTitle>
    <MenuBar />
    <Workspace>
      <Neighbour />
      <LeftColumn>
        <LaySummary />
        <CableStatus />
      </LeftColumn>
      <RightColumn>
        <Viewer />
        <Profile />
      </RightColumn>
    </Workspace>
    <Splitter />
    <DataDock />
  </Page>
);

export default App;
